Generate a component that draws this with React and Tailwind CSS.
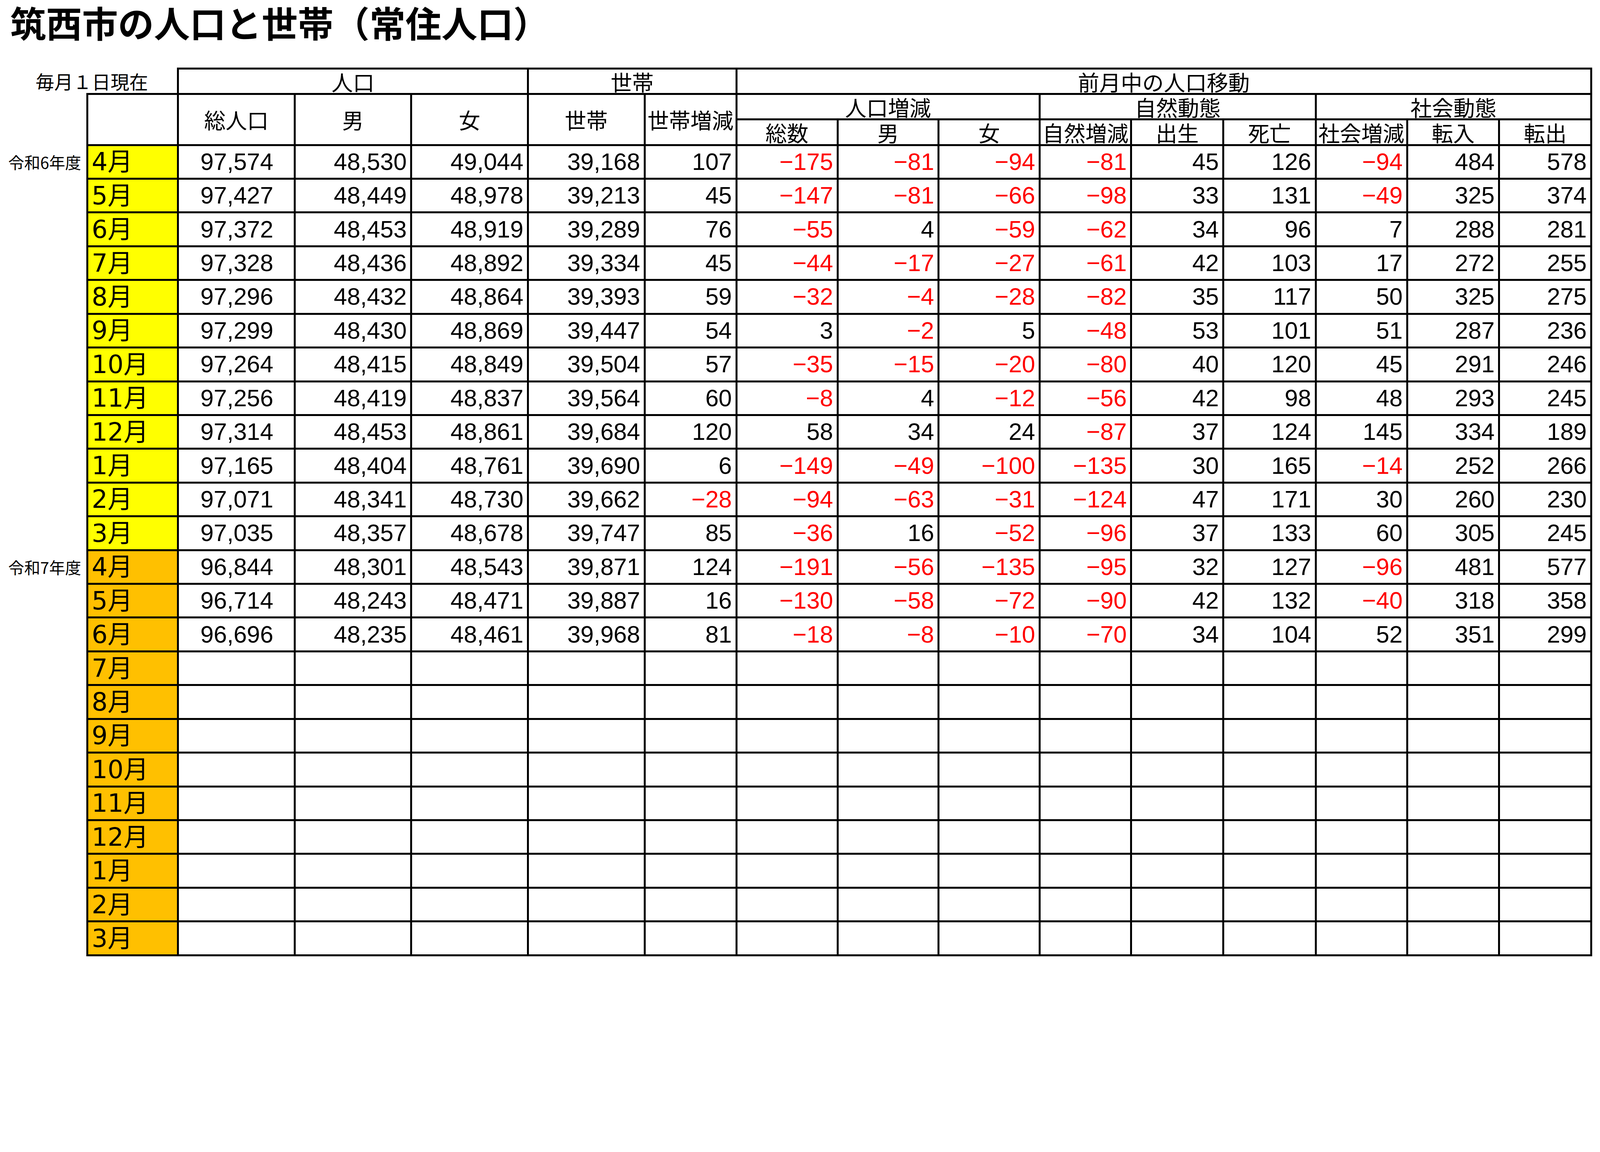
import React from "react";

const R6 = [
  ["4月", "97,574", "48,530", "49,044", "39,168", "107", "-175", "-81", "-94", "-81", "45", "126", "-94", "484", "578"],
  ["5月", "97,427", "48,449", "48,978", "39,213", "45", "-147", "-81", "-66", "-98", "33", "131", "-49", "325", "374"],
  ["6月", "97,372", "48,453", "48,919", "39,289", "76", "-55", "4", "-59", "-62", "34", "96", "7", "288", "281"],
  ["7月", "97,328", "48,436", "48,892", "39,334", "45", "-44", "-17", "-27", "-61", "42", "103", "17", "272", "255"],
  ["8月", "97,296", "48,432", "48,864", "39,393", "59", "-32", "-4", "-28", "-82", "35", "117", "50", "325", "275"],
  ["9月", "97,299", "48,430", "48,869", "39,447", "54", "3", "-2", "5", "-48", "53", "101", "51", "287", "236"],
  ["10月", "97,264", "48,415", "48,849", "39,504", "57", "-35", "-15", "-20", "-80", "40", "120", "45", "291", "246"],
  ["11月", "97,256", "48,419", "48,837", "39,564", "60", "-8", "4", "-12", "-56", "42", "98", "48", "293", "245"],
  ["12月", "97,314", "48,453", "48,861", "39,684", "120", "58", "34", "24", "-87", "37", "124", "145", "334", "189"],
  ["1月", "97,165", "48,404", "48,761", "39,690", "6", "-149", "-49", "-100", "-135", "30", "165", "-14", "252", "266"],
  ["2月", "97,071", "48,341", "48,730", "39,662", "-28", "-94", "-63", "-31", "-124", "47", "171", "30", "260", "230"],
  ["3月", "97,035", "48,357", "48,678", "39,747", "85", "-36", "16", "-52", "-96", "37", "133", "60", "305", "245"],
];

const R7 = [
  ["4月", "96,844", "48,301", "48,543", "39,871", "124", "-191", "-56", "-135", "-95", "32", "127", "-96", "481", "577"],
  ["5月", "96,714", "48,243", "48,471", "39,887", "16", "-130", "-58", "-72", "-90", "42", "132", "-40", "318", "358"],
  ["6月", "96,696", "48,235", "48,461", "39,968", "81", "-18", "-8", "-10", "-70", "34", "104", "52", "351", "299"],
  ["7月"], ["8月"], ["9月"], ["10月"], ["11月"], ["12月"], ["1月"], ["2月"], ["3月"],
];

const cell = "border-[5px] border-black p-0 align-middle";
const hdr = cell + " text-center text-[55px] leading-none font-['Noto_Sans_CJK_JP',sans-serif] whitespace-nowrap";

function Num({ v, center }) {
  if (v === undefined) {
    return <td className={cell}></td>;
  }
  const neg = v.startsWith("-");
  const text = neg ? "\u2212" + v.slice(1) : v;
  return (
    <td
      className={
        cell +
        " text-[61px] leading-none font-['Liberation_Sans',Arial,sans-serif] " +
        (center ? "text-center pl-[3px] " : "text-right pr-[9px] ") +
        (neg ? "text-[#ff0000]" : "text-black")
      }
    >
      {text}
    </td>
  );
}

function DataRow({ row, label, bg }) {
  const vals = row.slice(1);
  return (
    <tr className="h-[86.43px]">
      <td className="p-0 pr-[13px] align-middle text-right text-[41px] leading-none font-['Noto_Sans_CJK_JP',sans-serif] whitespace-nowrap">
        {label || ""}
      </td>
      <td className={cell + " pl-[9px] text-left text-[64px] leading-none font-['DejaVu_Sans','Noto_Sans_CJK_JP',sans-serif] whitespace-nowrap " + bg}>
        {row[0]}
      </td>
      {Array.from({ length: 14 }).map((_, i) => (
        <Num key={i} v={vals[i]} center={i === 0} />
      ))}
    </tr>
  );
}

export default function App() {
  return (
    <div className="w-[4096px] h-[2465px] bg-white text-black overflow-hidden">
      <div className="h-[173px] pl-[26px] pt-[1px]">
        <h1 className="text-[92px] leading-[1.2] font-bold font-['Noto_Sans_CJK_JP',sans-serif] whitespace-nowrap">
          筑西市の人口と世帯（常住人口）
        </h1>
      </div>
      <table className="table-fixed border-collapse w-[4073.5px]">
        <colgroup>
          <col className="w-[223.2px]" />
          <col className="w-[232.3px]" />
          <col className="w-[298.8px]" />
          <col className="w-[298.3px]" />
          <col className="w-[298.8px]" />
          <col className="w-[298.8px]" />
          <col className="w-[234.8px]" />
          <col className="w-[259.1px]" />
          <col className="w-[258.7px]" />
          <col className="w-[258.7px]" />
          <col className="w-[234.4px]" />
          <col className="w-[235.7px]" />
          <col className="w-[236.5px]" />
          <col className="w-[234px]" />
          <col className="w-[235.7px]" />
          <col className="w-[235.7px]" />
        </colgroup>
        <tbody>
          <tr className="h-[65.19px]">
            <td colSpan={2} className="p-0 pl-[17px] text-center align-middle text-[48px] leading-none font-['Noto_Sans_CJK_JP',sans-serif] whitespace-nowrap">
              毎月１日現在
            </td>
            <td colSpan={3} className={hdr}>人口</td>
            <td colSpan={2} className={hdr}>世帯</td>
            <td colSpan={9} className={hdr}>前月中の人口移動</td>
          </tr>
          <tr className="h-[65.19px]">
            <td className="p-0"></td>
            <td rowSpan={2} className={cell}></td>
            <td rowSpan={2} className={hdr}>総人口</td>
            <td rowSpan={2} className={hdr}>男</td>
            <td rowSpan={2} className={hdr}>女</td>
            <td rowSpan={2} className={hdr}>世帯</td>
            <td rowSpan={2} className={hdr}>世帯増減</td>
            <td colSpan={3} className={hdr}>人口増減</td>
            <td colSpan={3} className={hdr}>自然動態</td>
            <td colSpan={3} className={hdr}>社会動態</td>
          </tr>
          <tr className="h-[65.19px]">
            <td className="p-0"></td>
            <td className={hdr}>総数</td>
            <td className={hdr}>男</td>
            <td className={hdr}>女</td>
            <td className={hdr}>自然増減</td>
            <td className={hdr}>出生</td>
            <td className={hdr}>死亡</td>
            <td className={hdr}>社会増減</td>
            <td className={hdr}>転入</td>
            <td className={hdr}>転出</td>
          </tr>
          {R6.map((r, i) => (
            <DataRow key={"a" + i} row={r} label={i === 0 ? "令和6年度" : ""} bg="bg-[#ffff00]" />
          ))}
          {R7.map((r, i) => (
            <DataRow key={"b" + i} row={r} label={i === 0 ? "令和7年度" : ""} bg="bg-[#ffc000]" />
          ))}
        </tbody>
      </table>
    </div>
  );
}
